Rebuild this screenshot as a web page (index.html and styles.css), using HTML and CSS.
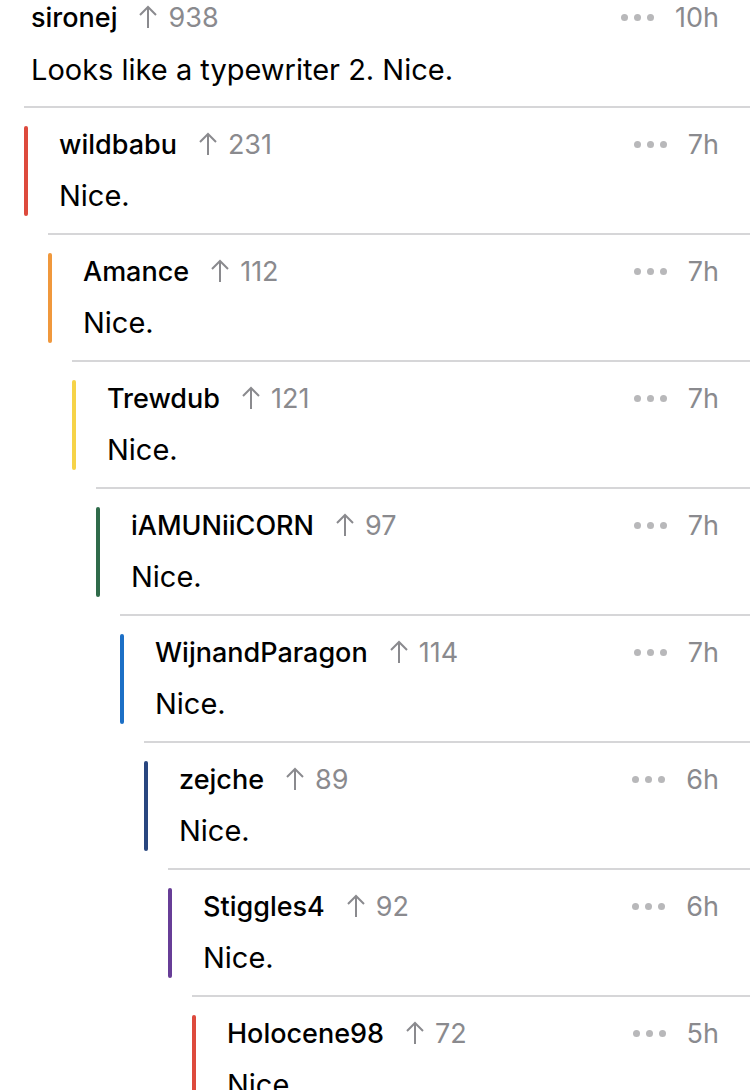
FILE: index.html
```html
<!DOCTYPE html>
<html lang="en">
<head>
  <title>Comments</title>
  <link rel="stylesheet" href="styles.css">
</head>
<body>
  <div class="thread">
    <div class="comment top">
      <div class="content">
        <div class="meta">
          <span class="author">sironej</span>
          <span class="score"><svg class="arrow" viewBox="0 0 20 24"><path d="M10 23V2M2 10l8-8 8 8"/></svg>938</span>
          <span class="right"><span class="dots"><i></i><i></i><i></i></span><span class="age">10h</span></span>
        </div>
        <p class="body">Looks like a typewriter 2. Nice.</p>
      </div>
    </div>

    <div class="replies">
      <div class="comment">
        <span class="bar red"></span>
        <div class="content">
          <div class="meta">
            <span class="author">wildbabu</span>
            <span class="score"><svg class="arrow" viewBox="0 0 20 24"><path d="M10 23V2M2 10l8-8 8 8"/></svg>231</span>
            <span class="right"><span class="dots"><i></i><i></i><i></i></span><span class="age">7h</span></span>
          </div>
          <p class="body">Nice.</p>
        </div>
      </div>

      <div class="replies">
        <div class="comment">
          <span class="bar orange"></span>
          <div class="content">
            <div class="meta">
              <span class="author">Amance</span>
              <span class="score"><svg class="arrow" viewBox="0 0 20 24"><path d="M10 23V2M2 10l8-8 8 8"/></svg>112</span>
              <span class="right"><span class="dots"><i></i><i></i><i></i></span><span class="age">7h</span></span>
            </div>
            <p class="body">Nice.</p>
          </div>
        </div>

        <div class="replies">
          <div class="comment">
            <span class="bar yellow"></span>
            <div class="content">
              <div class="meta">
                <span class="author">Trewdub</span>
                <span class="score"><svg class="arrow" viewBox="0 0 20 24"><path d="M10 23V2M2 10l8-8 8 8"/></svg>121</span>
                <span class="right"><span class="dots"><i></i><i></i><i></i></span><span class="age">7h</span></span>
              </div>
              <p class="body">Nice.</p>
            </div>
          </div>

          <div class="replies">
            <div class="comment">
              <span class="bar green"></span>
              <div class="content">
                <div class="meta">
                  <span class="author">iAMUNiiCORN</span>
                  <span class="score"><svg class="arrow" viewBox="0 0 20 24"><path d="M10 23V2M2 10l8-8 8 8"/></svg>97</span>
                  <span class="right"><span class="dots"><i></i><i></i><i></i></span><span class="age">7h</span></span>
                </div>
                <p class="body">Nice.</p>
              </div>
            </div>

            <div class="replies">
              <div class="comment">
                <span class="bar blue"></span>
                <div class="content">
                  <div class="meta">
                    <span class="author">WijnandParagon</span>
                    <span class="score"><svg class="arrow" viewBox="0 0 20 24"><path d="M10 23V2M2 10l8-8 8 8"/></svg>114</span>
                    <span class="right"><span class="dots"><i></i><i></i><i></i></span><span class="age">7h</span></span>
                  </div>
                  <p class="body">Nice.</p>
                </div>
              </div>

              <div class="replies">
                <div class="comment">
                  <span class="bar navy"></span>
                  <div class="content">
                    <div class="meta">
                      <span class="author">zejche</span>
                      <span class="score"><svg class="arrow" viewBox="0 0 20 24"><path d="M10 23V2M2 10l8-8 8 8"/></svg>89</span>
                      <span class="right"><span class="dots"><i></i><i></i><i></i></span><span class="age">6h</span></span>
                    </div>
                    <p class="body">Nice.</p>
                  </div>
                </div>

                <div class="replies">
                  <div class="comment">
                    <span class="bar purple"></span>
                    <div class="content">
                      <div class="meta">
                        <span class="author">Stiggles4</span>
                        <span class="score"><svg class="arrow" viewBox="0 0 20 24"><path d="M10 23V2M2 10l8-8 8 8"/></svg>92</span>
                        <span class="right"><span class="dots"><i></i><i></i><i></i></span><span class="age">6h</span></span>
                      </div>
                      <p class="body">Nice.</p>
                    </div>
                  </div>

                  <div class="replies">
                    <div class="comment">
                      <span class="bar red"></span>
                      <div class="content">
                        <div class="meta">
                          <span class="author">Holocene98</span>
                          <span class="score"><svg class="arrow" viewBox="0 0 20 24"><path d="M10 23V2M2 10l8-8 8 8"/></svg>72</span>
                          <span class="right"><span class="dots"><i></i><i></i><i></i></span><span class="age">5h</span></span>
                        </div>
                        <p class="body">Nice.</p>
                      </div>
                    </div>
                  </div>
                </div>
              </div>
            </div>
          </div>
        </div>
      </div>
    </div>
  </div>
</body>
</html>
```

FILE: styles.css
```css
body {
  margin: 0;
  background-color: #fff;
  font-family: "Inter", "Liberation Sans", sans-serif;
  color: #000;
  overflow: hidden;
}

.thread {
  width: 750px;
}

.replies {
  margin-left: 24px;
}

.comment {
  display: flex;
  border-top: 2px solid #d6d6d8;
  padding: 18px 31px 17px 0;
}

.comment.top {
  border-top: none;
  padding: 0 31px 16px 31px;
}

.bar {
  flex: none;
  width: 4px;
  border-radius: 2px;
  margin-right: 31px;
}

.red { background-color: #dd4a3d; }
.orange { background-color: #f0983c; }
.yellow { background-color: #f6d348; }
.green { background-color: #2f6b4a; }
.blue { background-color: #1c6fc6; }
.navy { background-color: #29467f; }
.purple { background-color: #673e97; }

.content {
  flex: 1;
  min-width: 0;
}

.meta {
  display: flex;
  align-items: center;
  height: 36px;
}

.top .meta {
  height: 34px;
}

.author {
  font-size: 27px;
  font-weight: 500;
}

.score {
  display: flex;
  align-items: center;
  margin-left: 21px;
  font-size: 27px;
  color: #8a8a8e;
}

.arrow {
  width: 20px;
  height: 24px;
  margin-right: 10px;
  fill: none;
  stroke: #8a8a8e;
  stroke-width: 2;
}

.right {
  display: flex;
  align-items: center;
  margin-left: auto;
}

.dots {
  display: flex;
  gap: 6px;
  margin-right: 21px;
}

.dots i {
  width: 7px;
  height: 7px;
  border-radius: 50%;
  background-color: #b8b8ba;
}

.age {
  font-size: 27px;
  color: #8a8a8e;
}

.body {
  margin: 14px 0 0 0;
  height: 40px;
  line-height: 40px;
  font-size: 29px;
}

.top .body {
  margin-top: 16px;
}
```
